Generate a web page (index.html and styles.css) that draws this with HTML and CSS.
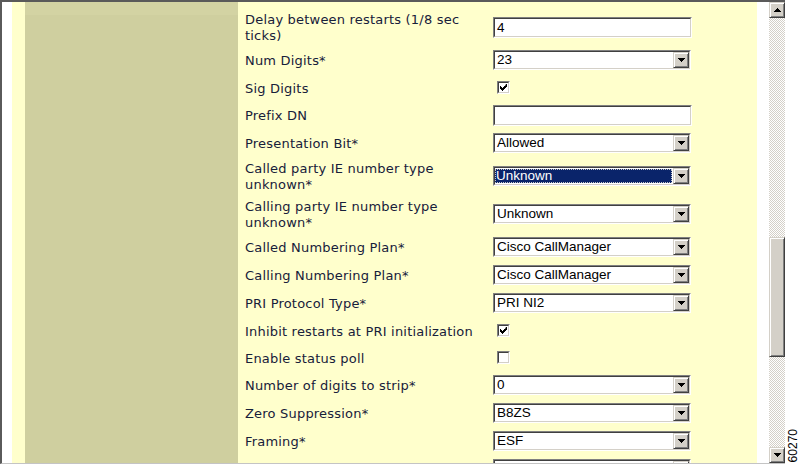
FILE: index.html
```html
<!DOCTYPE html>
<html>
<head>
<meta charset="utf-8">
<link rel="stylesheet" href="styles.css">
</head>
<body>
<div class="screen">
  <div class="frame">
    <div class="gutter"></div>
    <div class="stripe"></div>
    <div class="nav"><div class="nav-top"></div></div>
    <div class="form-wrap">
      <table class="form">
        <tr class="tail">
          <td class="lbl">ticks)</td>
          <td class="ctl"></td>
        </tr>
        <tr class="dbl">
          <td class="lbl"><div class="txt">Delay between restarts (1/8 sec<br>ticks)</div></td>
          <td class="ctl"><div class="inp"><div class="inp-in">4</div></div></td>
        </tr>
        <tr class="sgl">
          <td class="lbl"><div class="txt">Num Digits*</div></td>
          <td class="ctl"><div class="sel"><div class="sel-in"><span class="val">23</span><span class="drop"><svg width="7" height="4" viewBox="0 0 7 4"><path d="M0 0h7v1h-1v1h-1v1h-1v1h-1v-1h-1v-1h-1v-1h-1z"/></svg></span></div></div></td>
        </tr>
        <tr class="chkrow">
          <td class="lbl"><div class="txt">Sig Digits</div></td>
          <td class="ctl"><div class="chk"><div class="chk-in"><svg width="7" height="7" viewBox="0 0 7 7"><path d="M6 0h1v3h-1v1h-1v1h-1v1h-1v1h-1v-1h-1v-1h-1v-3h1v1h1v1h1v-1h1v-1h1z"/></svg></div></div></td>
        </tr>
        <tr class="sgl">
          <td class="lbl"><div class="txt">Prefix DN</div></td>
          <td class="ctl"><div class="inp"><div class="inp-in"></div></div></td>
        </tr>
        <tr class="sgl">
          <td class="lbl"><div class="txt">Presentation Bit*</div></td>
          <td class="ctl"><div class="sel"><div class="sel-in"><span class="val">Allowed</span><span class="drop"><svg width="7" height="4" viewBox="0 0 7 4"><path d="M0 0h7v1h-1v1h-1v1h-1v1h-1v-1h-1v-1h-1v-1h-1z"/></svg></span></div></div></td>
        </tr>
        <tr class="dbl">
          <td class="lbl"><div class="txt">Called party IE number type<br>unknown*</div></td>
          <td class="ctl"><div class="sel"><div class="sel-in"><span class="val hl">Unknown</span><span class="drop"><svg width="7" height="4" viewBox="0 0 7 4"><path d="M0 0h7v1h-1v1h-1v1h-1v1h-1v-1h-1v-1h-1v-1h-1z"/></svg></span></div></div></td>
        </tr>
        <tr class="dbl">
          <td class="lbl"><div class="txt">Calling party IE number type<br>unknown*</div></td>
          <td class="ctl"><div class="sel"><div class="sel-in"><span class="val">Unknown</span><span class="drop"><svg width="7" height="4" viewBox="0 0 7 4"><path d="M0 0h7v1h-1v1h-1v1h-1v1h-1v-1h-1v-1h-1v-1h-1z"/></svg></span></div></div></td>
        </tr>
        <tr class="sgl">
          <td class="lbl"><div class="txt">Called Numbering Plan*</div></td>
          <td class="ctl"><div class="sel"><div class="sel-in"><span class="val">Cisco CallManager</span><span class="drop"><svg width="7" height="4" viewBox="0 0 7 4"><path d="M0 0h7v1h-1v1h-1v1h-1v1h-1v-1h-1v-1h-1v-1h-1z"/></svg></span></div></div></td>
        </tr>
        <tr class="sgl">
          <td class="lbl"><div class="txt">Calling Numbering Plan*</div></td>
          <td class="ctl"><div class="sel"><div class="sel-in"><span class="val">Cisco CallManager</span><span class="drop"><svg width="7" height="4" viewBox="0 0 7 4"><path d="M0 0h7v1h-1v1h-1v1h-1v1h-1v-1h-1v-1h-1v-1h-1z"/></svg></span></div></div></td>
        </tr>
        <tr class="sgl">
          <td class="lbl"><div class="txt">PRI Protocol Type*</div></td>
          <td class="ctl"><div class="sel"><div class="sel-in"><span class="val">PRI NI2</span><span class="drop"><svg width="7" height="4" viewBox="0 0 7 4"><path d="M0 0h7v1h-1v1h-1v1h-1v1h-1v-1h-1v-1h-1v-1h-1z"/></svg></span></div></div></td>
        </tr>
        <tr class="chkrow">
          <td class="lbl"><div class="txt">Inhibit restarts at PRI initialization</div></td>
          <td class="ctl"><div class="chk"><div class="chk-in"><svg width="7" height="7" viewBox="0 0 7 7"><path d="M6 0h1v3h-1v1h-1v1h-1v1h-1v1h-1v-1h-1v-1h-1v-3h1v1h1v1h1v-1h1v-1h1z"/></svg></div></div></td>
        </tr>
        <tr class="chkrow">
          <td class="lbl"><div class="txt">Enable status poll</div></td>
          <td class="ctl"><div class="chk"><div class="chk-in"></div></div></td>
        </tr>
        <tr class="sgl">
          <td class="lbl"><div class="txt">Number of digits to strip*</div></td>
          <td class="ctl"><div class="sel"><div class="sel-in"><span class="val">0</span><span class="drop"><svg width="7" height="4" viewBox="0 0 7 4"><path d="M0 0h7v1h-1v1h-1v1h-1v1h-1v-1h-1v-1h-1v-1h-1z"/></svg></span></div></div></td>
        </tr>
        <tr class="sgl">
          <td class="lbl"><div class="txt">Zero Suppression*</div></td>
          <td class="ctl"><div class="sel"><div class="sel-in"><span class="val">B8ZS</span><span class="drop"><svg width="7" height="4" viewBox="0 0 7 4"><path d="M0 0h7v1h-1v1h-1v1h-1v1h-1v-1h-1v-1h-1v-1h-1z"/></svg></span></div></div></td>
        </tr>
        <tr class="sgl">
          <td class="lbl"><div class="txt">Framing*</div></td>
          <td class="ctl"><div class="sel"><div class="sel-in"><span class="val">ESF</span><span class="drop"><svg width="7" height="4" viewBox="0 0 7 4"><path d="M0 0h7v1h-1v1h-1v1h-1v1h-1v-1h-1v-1h-1v-1h-1z"/></svg></span></div></div></td>
        </tr>
        <tr class="sgl">
          <td class="lbl"></td>
          <td class="ctl"><div class="sel"><div class="sel-in"><span class="val"></span><span class="drop"><svg width="7" height="4" viewBox="0 0 7 4"><path d="M0 0h7v1h-1v1h-1v1h-1v1h-1v-1h-1v-1h-1v-1h-1z"/></svg></span></div></div></td>
        </tr>
      </table>
    </div>
    <div class="gap"></div>
    <div class="scrollbar">
      <div class="sb-btn"><svg width="7" height="4" viewBox="0 0 7 4"><path d="M3 0h1v1h1v1h1v1h1v1h-7v-1h1v-1h1v-1h1z"/></svg></div>
      <div class="sb-track">
        <div class="sb-thumb"></div>
      </div>
      <div class="sb-btn"><svg width="7" height="4" viewBox="0 0 7 4"><path d="M0 0h7v1h-1v1h-1v1h-1v1h-1v-1h-1v-1h-1v-1h-1z"/></svg></div>
    </div>
  </div>
  <div class="figid"><span class="figtext">60270</span></div>
</div>
</body>
</html>
```

FILE: styles.css
```css
html, body {
  margin: 0;
  padding: 0;
  background: #ffffff;
}

.screen {
  display: flex;
  width: 801px;
  height: 466px;
  overflow: hidden;
}

.frame {
  display: flex;
  width: 785px;
  height: 464px;
  box-sizing: border-box;
  border-top: 2px solid #5a5a5a;
  border-left: 2px solid #5a5a5a;
  border-bottom: 1px solid #c4c4c4;
  flex: none;
}

.gutter {
  width: 10px;
  flex: none;
  background: #ffffff;
}

.stripe {
  width: 13px;
  flex: none;
  background: #ffffcc;
}

.nav {
  width: 213px;
  flex: none;
  background: #cfcf9f;
}

.nav-top {
  height: 13px;
  background: #d3d3a3;
}

.form-wrap {
  width: 519px;
  flex: none;
  background: #ffffcc;
  overflow: hidden;
}

.form {
  border-collapse: collapse;
  border-spacing: 0;
  margin-top: -13px;
  width: 519px;
}

.form td {
  padding: 0;
  vertical-align: middle;
}

.lbl {
  width: 248px;
  padding-left: 7px !important;
  font-family: "DejaVu Sans", Verdana, sans-serif;
  font-size: 13px;
  letter-spacing: 0.2px;
  line-height: 16px;
  color: #17203a;
  white-space: nowrap;
}

.txt {
  padding-top: 2px;
}

.tail td {
  height: 19px;
  vertical-align: top;
}

.dbl td { height: 38px; }
.sgl td { height: 28px; }
.chkrow td { height: 27px; }

.ctl {
  font-family: "Liberation Sans", Arial, sans-serif;
}

.sel, .inp {
  width: 198px;
  height: 20px;
  box-sizing: border-box;
  border: 1px solid;
  border-color: #808080 #ffffff #ffffff #808080;
}

.inp {
  width: 199px;
  height: 21px;
}

.sel-in, .inp-in {
  height: 100%;
  box-sizing: border-box;
  border: 1px solid;
  border-color: #404040 #d4d0c8 #d4d0c8 #404040;
  background: #ffffff;
}

.sel-in {
  display: flex;
}

.inp-in {
  font-size: 13.5px;
  line-height: 17px;
  padding-left: 2px;
  color: #000;
}

.val {
  flex: 1;
  font-size: 13.5px;
  line-height: 16px;
  padding-left: 2px;
  color: #000000;
  white-space: nowrap;
  overflow: hidden;
}

.val.hl {
  background: #0a246a;
  color: #ffffff;
  margin: 1px 1px 1px 0;
  line-height: 14px;
  padding-left: 1px;
  outline: 1px dotted #c8c8c8;
  outline-offset: -1px;
}

.drop, .sb-btn {
  width: 16px;
  flex: none;
  box-sizing: border-box;
  background: #d4d0c8;
  border: 1px solid;
  border-color: #d4d0c8 #404040 #404040 #d4d0c8;
  box-shadow: inset 1px 1px #ffffff, inset -1px -1px #808080;
  display: flex;
  align-items: center;
  justify-content: center;
}

.drop svg, .sb-btn svg {
  display: block;
  fill: #000000;
}

.chk {
  width: 13px;
  height: 13px;
  margin-left: 4px;
  box-sizing: border-box;
  border: 1px solid;
  border-color: #808080 #ffffff #ffffff #808080;
}

.chk-in {
  height: 100%;
  box-sizing: border-box;
  border: 1px solid;
  border-color: #404040 #d4d0c8 #d4d0c8 #404040;
  background: #ffffff;
  display: flex;
  align-items: center;
  justify-content: center;
}

.chk-in svg {
  display: block;
  fill: #000000;
}

.gap {
  width: 12px;
  flex: none;
  background: #ffffff;
}

.scrollbar {
  width: 16px;
  flex: none;
  display: flex;
  flex-direction: column;
}

.sb-btn {
  height: 16px;
}

.sb-track {
  flex: 1;
  background: repeating-conic-gradient(#d4d0c8 0 25%, #ffffff 0 50%) 0 0 / 2px 2px;
  padding-top: 219px;
}

.sb-thumb {
  height: 120px;
  box-sizing: border-box;
  background: #d4d0c8;
  border: 1px solid;
  border-color: #d4d0c8 #404040 #404040 #d4d0c8;
  box-shadow: inset 1px 1px #ffffff, inset -1px -1px #808080;
}

.figid {
  width: 16px;
  flex: none;
  display: flex;
  flex-direction: column;
  justify-content: flex-end;
  align-items: center;
  padding-bottom: 4px;
  box-sizing: border-box;
}

.figtext {
  writing-mode: vertical-rl;
  transform: rotate(180deg);
  font-family: "Liberation Sans", Arial, sans-serif;
  font-size: 12px;
  line-height: 12px;
  color: #000000;
}
```
